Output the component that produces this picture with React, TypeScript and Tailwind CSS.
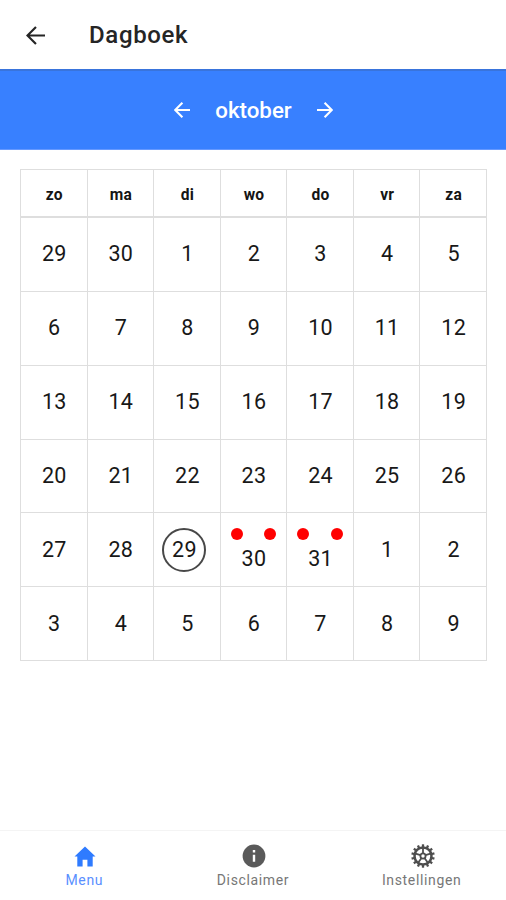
import React from "react";

const days = ["zo", "ma", "di", "wo", "do", "vr", "za"];
const weeks = [
  [29, 30, 1, 2, 3, 4, 5],
  [6, 7, 8, 9, 10, 11, 12],
  [13, 14, 15, 16, 17, 18, 19],
  [20, 21, 22, 23, 24, 25, 26],
  [27, 28, 29, 30, 31, 1, 2],
  [3, 4, 5, 6, 7, 8, 9],
];

function Arrow({ className }: { className: string }) {
  return (
    <svg viewBox="0 0 20 20" className={className} fill="none" stroke="currentColor">
      <path d="M20 10H1.5M10.5 1L1.5 10l9 9" />
    </svg>
  );
}

function HomeIcon() {
  return (
    <svg viewBox="0 0 22 21" className="h-[21px] w-[22px]" fill="currentColor">
      <path d="M11 .5L.5 10.5h2.8v10h5.3v-6.7h4.8v6.7h5.3v-10h2.8z" />
    </svg>
  );
}

function InfoIcon() {
  return (
    <svg viewBox="0 0 24 24" className="size-6">
      <circle cx="12" cy="12" r="11.4" fill="currentColor" />
      <path d="M10.8 6h2.4v2.4h-2.4zM10.8 10.7h2.4v7.1h-2.4z" fill="#fff" />
    </svg>
  );
}

function GearIcon() {
  return (
    <svg viewBox="0 0 24 24" className="size-6" fill="none" stroke="currentColor">
      <circle cx="12" cy="12" r="8.5" strokeWidth="2.5" />
      <circle cx="12" cy="12" r="2.6" strokeWidth="1.8" />
      {Array.from({ length: 14 }, (_, i) => (
        <path key={i} d="M12 3V.3" strokeWidth="2.3" transform={`rotate(${(i * 360) / 14} 12 12)`} />
      ))}
      {Array.from({ length: 5 }, (_, i) => (
        <path key={i} d="M12 9.5V4" strokeWidth="1.8" transform={`rotate(${i * 72} 12 12)`} />
      ))}
    </svg>
  );
}

function DayCell({ value, selected, marked }: { value: number; selected: boolean; marked: boolean }) {
  return (
    <div className="flex flex-col items-center justify-center border-r border-b border-[#dedede] pl-px text-[21.5px] leading-6 tracking-[0.3px] text-[#181818]">
      {marked && (
        <div className="mb-[7px] flex w-full justify-between pr-[10px] pl-[9px]">
          <span className="size-3 rounded-full bg-[#ff0000]" />
          <span className="size-3 rounded-full bg-[#ff0000]" />
        </div>
      )}
      {selected ? (
        <span className="mr-[6px] flex size-11 items-center justify-center rounded-full border-2 border-[#484848]">{value}</span>
      ) : (
        <span>{value}</span>
      )}
    </div>
  );
}

export default function App() {
  return (
    <div className="flex h-[900px] w-[506px] flex-col bg-white font-['Roboto',sans-serif]">
      <header className="flex h-[69px] shrink-0 items-center pt-px pl-[26px] text-[#252525]">
        <Arrow className="size-[19px] stroke-[2.3]" />
        <h1 className="ml-11 text-[24px] leading-8 font-medium tracking-[0.65px]">Dagboek</h1>
      </header>
      <div className="flex h-[81px] shrink-0 items-center justify-center border-t-2 border-b border-t-[#3974dc] border-b-[#6699ff] bg-[#3880ff] pb-px text-white">
        <Arrow className="size-4 stroke-[2.6]" />
        <span className="w-[127px] pl-px text-center text-[22.3px] leading-8 font-medium">oktober</span>
        <Arrow className="size-4 rotate-180 stroke-[2.6]" />
      </div>
      <main className="flex-1 pt-[19px] pl-5">
        <div className="w-[467px] border-t border-l border-[#dedede]">
          <div className="grid h-[48px] grid-cols-7">
            {days.map((day) => (
              <div key={day} className="flex items-center justify-center border-r border-b-2 border-[#dedede] pt-[5px] pl-px text-[15.6px] font-bold tracking-[0.2px] text-[#151515]">
                {day}
              </div>
            ))}
          </div>
          <div className="grid h-[443px] grid-cols-7 grid-rows-6">
            {weeks.map((week, row) =>
              week.map((value, col) => (
                <DayCell key={`${row}-${col}`} value={value} selected={row === 4 && col === 2} marked={row === 4 && (col === 3 || col === 4)} />
              )),
            )}
          </div>
        </div>
      </main>
      <nav className="grid h-[70px] shrink-0 grid-cols-3 border-t border-[#f4f4f4] text-[14px] leading-4 tracking-[0.65px]">
        <div className="flex flex-col items-center pt-[13px] text-[#2f7bff]">
          <div className="flex h-6 items-center pl-[2px]"><HomeIcon /></div>
          <span className="mt-1 text-[#5a8fff]">Menu</span>
        </div>
        <div className="flex flex-col items-center pt-[13px] text-[#5a5a5a]">
          <div className="pl-[2px]"><InfoIcon /></div>
          <span className="mt-1 text-[#777777]">Disclaimer</span>
        </div>
        <div className="flex flex-col items-center pt-[13px] text-[#4d4d4d]">
          <div className="pl-[2px]"><GearIcon /></div>
          <span className="mt-1 text-[#777777]">Instellingen</span>
        </div>
      </nav>
    </div>
  );
}
